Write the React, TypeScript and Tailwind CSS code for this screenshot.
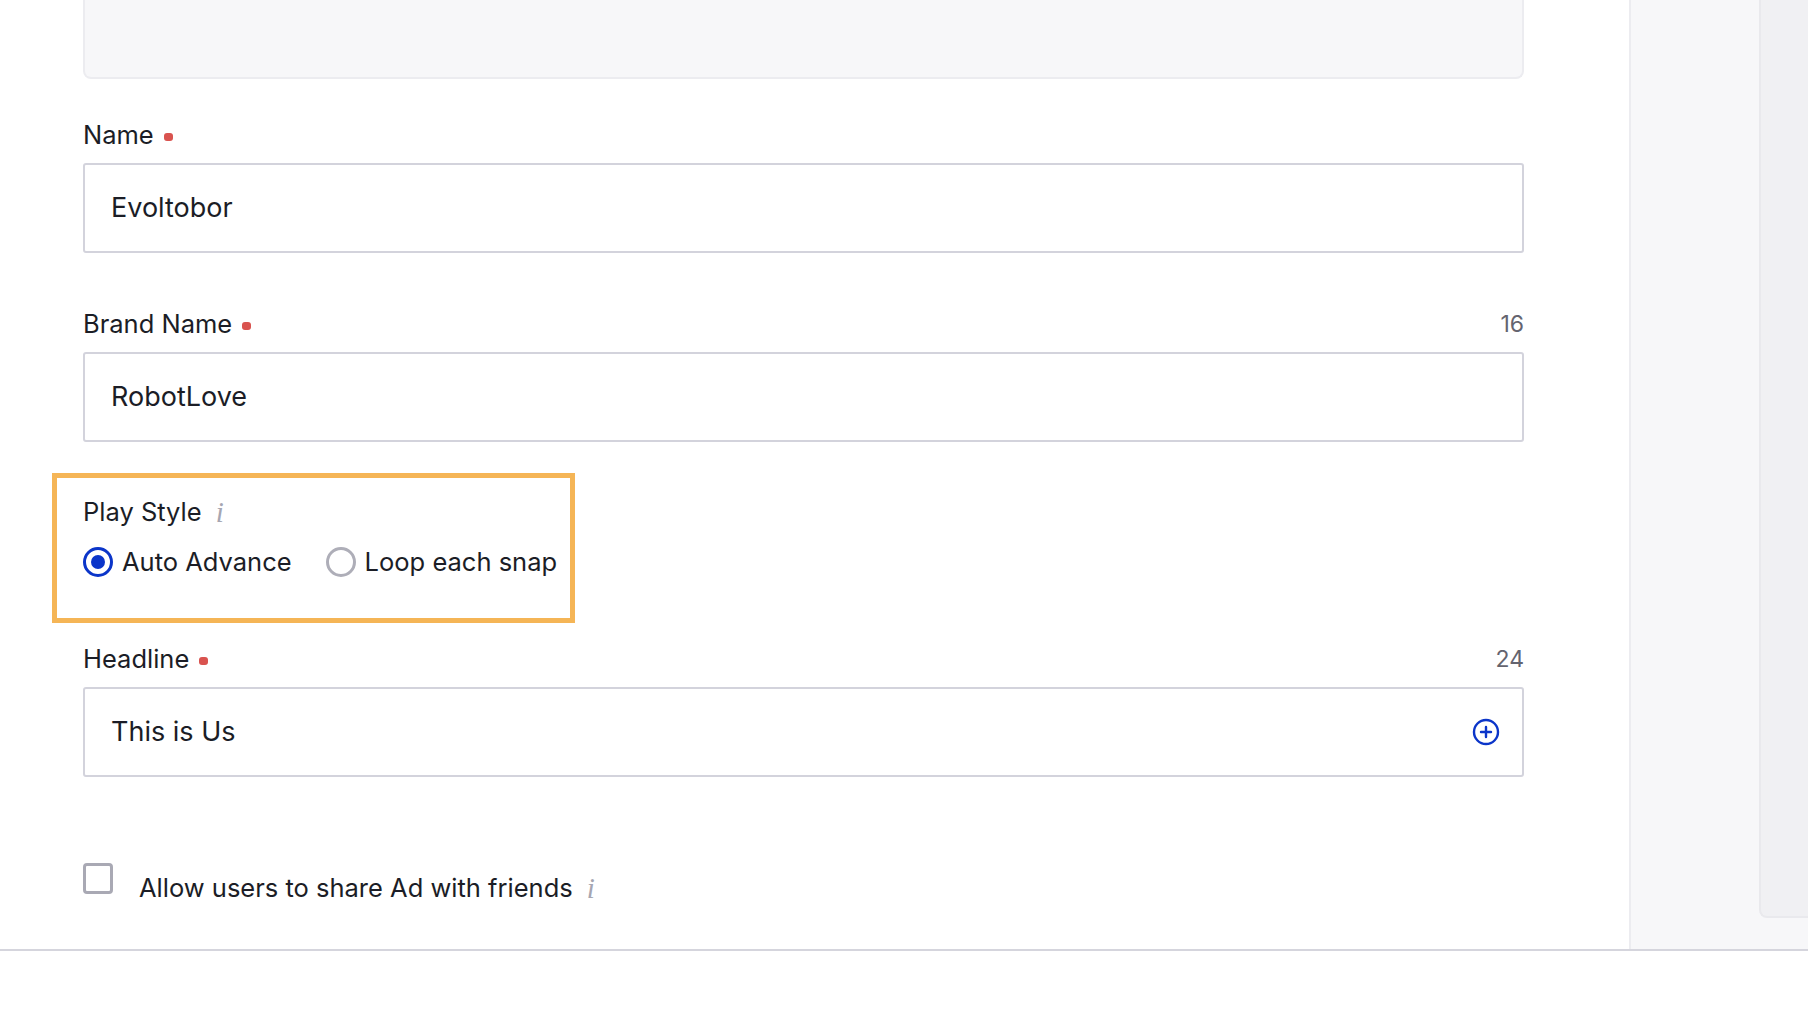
const fontStack = "font-['Inter','Liberation_Sans',sans-serif]";

function RequiredDot() {
  return <span className="ml-[10px] mt-[4px] inline-block h-[8px] w-[9px] rounded-[3px] bg-[#d9534f]" />;
}

function InfoMark() {
  return (
    <span className="font-['Liberation_Serif',serif] text-[29px] italic leading-none text-[#a6a6b2]">i</span>
  );
}

function FieldLabel({ label, required, count }: { label: string; required?: boolean; count?: string }) {
  return (
    <div className="flex h-[32px] items-center justify-between">
      <div className="flex items-center text-[25.5px] text-[#1b1d26]">
        {label}
        {required && <RequiredDot />}
      </div>
      {count && <span className="text-[23px] text-[#64646f]">{count}</span>}
    </div>
  );
}

function TextField({ value, withAdd }: { value: string; withAdd?: boolean }) {
  return (
    <div className="mt-[12px] flex h-[90px] items-center justify-between rounded-[3px] border-2 border-[#d3d3dc] bg-white pl-[26px] pr-[22px]">
      <span className="text-[27px] text-[#1b1d26]">{value}</span>
      {withAdd && (
        <svg width="28" height="28" viewBox="0 0 28 28" fill="none" stroke="#0b35c9" strokeWidth="2.4">
          <circle cx="14" cy="14" r="12" />
          <path d="M14 9v10M9 14h10" strokeLinecap="round" />
        </svg>
      )}
    </div>
  );
}

function RadioOption({ label, checked }: { label: string; checked?: boolean }) {
  return (
    <div className="flex items-center gap-[9px]">
      <span
        className={
          checked
            ? 'flex h-[30px] w-[30px] items-center justify-center rounded-full border-[3px] border-[#0b35c9]'
            : 'flex h-[30px] w-[30px] items-center justify-center rounded-full border-[3px] border-[#aeaeb8]'
        }
      >
        {checked && <span className="h-[14px] w-[14px] rounded-full bg-[#0b35c9]" />}
      </span>
      <span className="text-[25.5px] text-[#1b1d26]">{label}</span>
    </div>
  );
}

export default function App() {
  return (
    <div className={`${fontStack} h-[1018px] w-[1808px] overflow-hidden bg-white`}>
      <div className="flex h-[951px] border-b-2 border-[#d5d5dd]">
        {/* Form column */}
        <div className="w-[1629px] shrink-0 pl-[83px]">
          <div className="w-[1441px]">
            <div className="h-[79px] rounded-b-[8px] border-2 border-t-0 border-[#ececf0] bg-[#f7f7f9]" />

            <div className="mt-[40px]">
              <FieldLabel label="Name" required />
              <TextField value="Evoltobor" />
            </div>

            <div className="mt-[55px]">
              <FieldLabel label="Brand Name" required count="16" />
              <TextField value="RobotLove" />
            </div>

            {/* Highlighted play style */}
            <div className="ml-[-31px] mt-[31px] h-[150px] w-[523px] border-[5px] border-[#f5b556] pl-[26px] pt-[18px]">
              <div className="flex h-[32px] items-center gap-[14px] text-[25.5px] text-[#1b1d26]">
                Play Style
                <InfoMark />
              </div>
              <div className="mt-[15px] flex items-center gap-[34px]">
                <RadioOption label="Auto Advance" checked />
                <RadioOption label="Loop each snap" />
              </div>
            </div>

            <div className="mt-[20px]">
              <FieldLabel label="Headline" required count="24" />
              <TextField value="This is Us" withAdd />
            </div>

            <div className="mt-[86px] flex items-start">
              <span className="h-[31px] w-[30px] rounded-[4px] border-[3px] border-[#a9a9b4]" />
              <div className="ml-[26px] mt-[6px] flex items-center gap-[14px] text-[25.5px] text-[#1b1d26]">
                Allow users to share Ad with friends
                <InfoMark />
              </div>
            </div>
          </div>
        </div>

        {/* Right rail */}
        <div className="flex-1 border-l-2 border-[#ececf0] bg-[#f7f7f9] pl-[128px]">
          <div className="h-[918px] rounded-bl-[8px] border-b-2 border-l-2 border-[#e9e9ed] bg-[#f0f0f3]" />
        </div>
      </div>
    </div>
  );
}
